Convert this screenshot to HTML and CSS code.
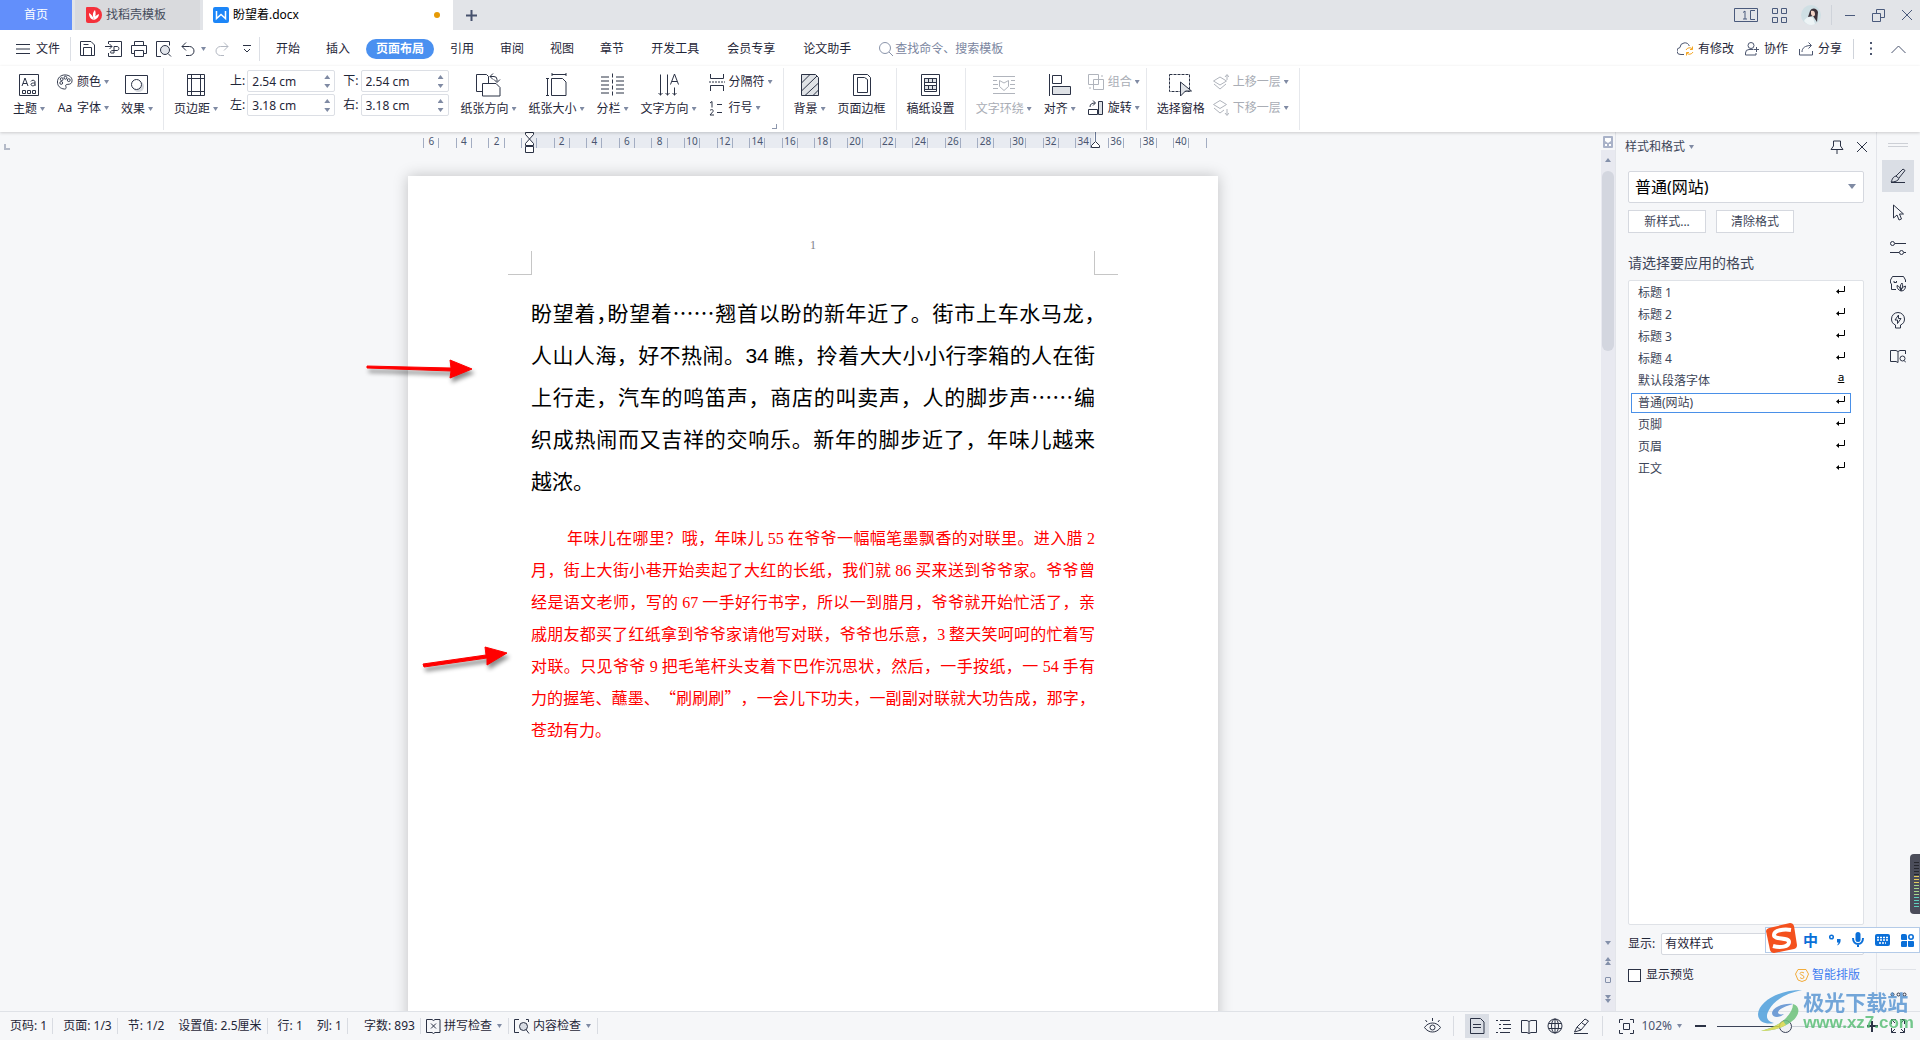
FILE: index.html
```html
<!DOCTYPE html>
<html lang="zh-CN">
<head>
<meta charset="utf-8">
<title>盼望着.docx</title>
<link rel="stylesheet" href="styles.css">
</head>
<body>
<div class="app">
  <header class="titlebar">
    <div class="tab tab-home">首页</div>
    <div class="tab tab-store">
      <svg width="16" height="16" viewBox="0 0 16 16"><path d="M1 0h7a8 8 0 0 1 0 16H2a2 2 0 0 1-2-2V1a1 1 0 0 1 1-1z" fill="#f5313b"/><path d="M8 13C4 12 3 9 3 6c2 1 4 3 5 7zM8 12c-2-4-1-7 1-9 1 3 1 6-1 9zM8 13c0-3 2-5 5-6 0 3-2 5-5 6z" fill="#fff"/></svg>
      找稻壳模板
    </div>
    <div class="tab tab-doc">
      <svg width="16" height="16" viewBox="0 0 16 16"><rect width="16" height="16" rx="2" fill="#1c86f8"/><path d="M3.500 4v7.500L8 7.500l4.500 4V4" fill="none" stroke="#fff" stroke-width="1.500"/></svg>
      <span>盼望着.docx</span><i class="unsaved"></i>
    </div>
    <button class="icon-btn new-tab" aria-label="新建"><svg width="13" height="13" viewBox="0 0 13 13"><path d="M6.500 1v11M1 6.500h11" stroke="#46516d" stroke-width="2"/></svg></button>
    <div class="window-tools">
      <svg width="24" height="15" viewBox="0 0 24 15"><path d="M.5.500h23v13H.500zM21 2.500h-4.500v9H21M19 11.500h2M9 4.500l2-1.500v8M9 11h4" fill="none" stroke="#4a5a7c"/></svg>
      <svg width="15" height="15" viewBox="0 0 15 15"><path d="M.5.500h5v5h-5zM9.500.500h5v5h-5zM.5 9.500h5v5h-5zM9.500 9.500h5v5h-5z" fill="none" stroke="#4a5a7c"/></svg>
      <svg width="20" height="20" viewBox="0 0 20 20"><circle cx="10" cy="10" r="10" fill="#cfdfe4"/><path d="M9 6c2-4 7-3 8 1l-1 10-4-6-5 1z" fill="#3a3038"/><path d="M10 6c2-1 4 0 4 3s-3 3-4 0z" fill="#f1d3c6"/><path d="M3 16c2-4 6-5 9-3l2 6c-4 2-8 1-11-3z" fill="#edf4f6"/></svg>
      <i class="divider"></i>
      <button class="icon-btn" aria-label="最小化"><svg width="12" height="12" viewBox="0 0 12 12"><path d="M1 6.500h10" stroke="#4a5a7c"/></svg></button>
      <button class="icon-btn" aria-label="还原"><svg width="13" height="13" viewBox="0 0 13 13"><path d="M.5 4.500h8v8h-8zM4.500 4.500v-4h8v8h-4" fill="none" stroke="#4a5a7c"/></svg></button>
      <button class="icon-btn" aria-label="关闭"><svg width="12" height="12" viewBox="0 0 12 12"><path d="M1 1l10 10M11 1L1 11" stroke="#4a5a7c"/></svg></button>
    </div>
  </header>

  <nav class="menubar">
    <button class="file-btn"><svg width="15" height="12" viewBox="0 0 15 12"><path d="M0 1.500h14M0 6h14M0 10.500h14" stroke="#2b3245"/></svg>文件</button>
    <div class="quick">
      <svg width="16" height="16" viewBox="0 0 16 16"><path d="M.5.500h10.500l3.500 3.500v10.500H.500zM3.500 14.500V6.500h8v8M3.500 3.500h5"/></svg>
      <svg width="17" height="16" viewBox="0 0 17 16"><path d="M3.500 3V.500h13v15h-13V12M0 5.500h7M4.500 3l2.500 2.500L4.500 8M6 12h3V5.500h3c2.500 0 2.500 4 0 4H8c-3 0-3 2.500-2 2.500"/></svg>
      <svg width="16" height="16" viewBox="0 0 16 16"><path d="M3.500 4.500v-4h9v4M3.500 12.500h-3v-8h15v8h-3M3.500 9.500h9v6h-9z"/></svg>
      <svg width="16" height="16" viewBox="0 0 16 16"><path d="M5 15.500H.500V.500h13v4"/><circle cx="9" cy="9" r="4.500" fill="#e3e6ec"/><path d="M12 12.500l3 3"/></svg>
      <span class="undo"><svg width="14" height="15" viewBox="0 0 14 15"><path d="M5 .5L1 4.500l4 4M1 4.500h7.500a4.500 4.500 0 0 1 0 9H5"/></svg><i class="caret"></i></span>
      <svg class="muted" width="14" height="15" viewBox="0 0 14 15"><path d="M9 .5l4 4-4 4M13 4.500H5.500a4.500 4.500 0 0 0 0 9H9"/></svg>
      <svg class="more" width="10" height="8" viewBox="0 0 10 8"><path d="M1 .5h8M2 4l3 3 3-3"/></svg>
    </div>
    <ul class="menus">
      <li><a href="#">开始</a></li><li><a href="#">插入</a></li><li><a href="#" class="active">页面布局</a></li><li><a href="#">引用</a></li><li><a href="#">审阅</a></li><li><a href="#">视图</a></li><li><a href="#">章节</a></li><li class="wide"><a href="#">开发工具</a></li><li class="wide"><a href="#">会员专享</a></li><li class="wide"><a href="#">论文助手</a></li>
    </ul>
    <label class="search"><svg width="15" height="15" viewBox="0 0 15 15"><circle cx="6" cy="6" r="5.500"/><path d="M10 10l4 4"/></svg><input type="text" placeholder="查找命令、搜索模板" aria-label="查找命令"></label>
    <div class="menu-right">
      <button><svg width="17" height="14" viewBox="0 0 17 14"><path d="M7 12.500H4A3.500 3.500 0 0 1 3 5.500 4.800 4.800 0 0 1 12.300 4" /><path d="M9 8a4 4 0 0 1 6.500-1M15.500 4.500V7.500h-2.500M16 10a4 4 0 0 1-6.500 1M9.500 13.500v-3H12" stroke="#f5a623"/></svg>有修改</button>
      <button><svg width="15" height="14" viewBox="0 0 15 14"><circle cx="6" cy="3.500" r="3"/><path d="M8.500 7.500H4a3.500 3.500 0 0 0-3.500 3.500v2h10.500v-2M11.500 5v5M9 7.500h5"/></svg>协作</button>
      <button><svg width="15" height="14" viewBox="0 0 15 14"><path d="M.5 7v6h13V9M3 10c0-4 3-6.500 9-6.500M9.500.500l3 3-3 3"/></svg>分享</button>
      <i class="divider"></i>
      <svg width="4" height="14" viewBox="0 0 4 14"><path d="M1 1h2M1 6.500h2M1 12h2" stroke-width="2"/></svg>
      <svg class="collapse" width="15" height="9" viewBox="0 0 15 9"><path d="M.5 8l7-7 7 7"/></svg>
    </div>
  </nav>

  <section class="ribbon">
    <div class="group">
      <button class="big"><svg width="20" height="22" viewBox="0 0 20 22"><path d="M.5.500h19v21H.500zM3.500 16.500h3v3h-3zM8.500 16.500h3v3h-3zM13.500 16.500h3v3h-3zM3 12l3-8 3 8M4 9.500h4M16 12V8c0-2.500-4-2-4-.5M16 9c-2 0-4 0-4 1.500s3 2 4 0"/></svg><span>主题<i class="caret"></i></span></button>
      <div class="stack">
        <button class="small"><svg width="17" height="16" viewBox="0 0 17 16"><path d="M8 15.500C3 15 .5 12 .5 8S3.500.500 8.500.500s7.500 3 7.500 6-2 4-4.500 4-2.500 1-2 2.500 0 2.500-1.500 2.500z"/><circle cx="4.500" cy="9" r="1.500"/><circle cx="5" cy="5" r="1.500"/><circle cx="9" cy="3.500" r="1.500"/><circle cx="12.500" cy="6" r="1.500"/></svg>颜色<i class="caret"></i></button>
        <button class="small"><span class="aa">Aa</span>字体<i class="caret"></i></button>
      </div>
      <button class="big"><svg width="24" height="20" viewBox="0 0 24 20"><circle cx="13.500" cy="11.500" r="5.500" fill="#d5d8de" stroke="none"/><path d="M.5.500h22v18H.500z"/><circle cx="11.500" cy="9.500" r="5" fill="#fff"/></svg><span>效果<i class="caret"></i></span></button>
    </div>
    <div class="group">
      <button class="big"><svg width="18" height="22" viewBox="0 0 18 22"><path d="M.5.500h17v21H.500zM4.500 0v22M13.500 0v22M0 4.500h18M0 17.500h18"/></svg><span>页边距<i class="caret"></i></span></button>
      <div class="margins">
        <label>上:<span class="spin"><input type="text" value="2.54 cm"><i></i></span></label>
        <label>下:<span class="spin"><input type="text" value="2.54 cm"><i></i></span></label>
        <label>左:<span class="spin"><input type="text" value="3.18 cm"><i></i></span></label>
        <label>右:<span class="spin"><input type="text" value="3.18 cm"><i></i></span></label>
      </div>
      <button class="big"><svg width="25" height="24" viewBox="0 0 25 24"><path d="M6 18.500H.500v-17h10l2 2v7M6.500 10.500h13.500l4 4v8.500H6.500zM17 .5l-3 3 3 3M14 3.500h4a3 3 0 0 1 3 3v2M18 6.500l3 3 3-3"/></svg><span>纸张方向<i class="caret"></i></span></button>
      <button class="big"><svg width="21" height="24" viewBox="0 0 21 24"><path d="M5.500 5.500h11l3.500 3.500v13.500H5.500zM1.500 5v18M0 5.500h3M0 22.500h3M6 1.500h14M6 0v3M20 0v3"/></svg><span>纸张大小<i class="caret"></i></span></button>
      <button class="big"><svg width="24" height="23" viewBox="0 0 24 23"><path d="M0 3.500h8M0 7.500h8M0 11.500h8M0 15.500h8M0 19.500h8M15 3.500h8M15 7.500h8M15 11.500h8M15 15.500h8M15 19.500h8"/><path d="M11.500 0v23" stroke-dasharray="4 2"/></svg><span>分栏<i class="caret"></i></span></button>
      <button class="big"><svg width="21" height="23" viewBox="0 0 21 23"><path d="M2.500 1v21M.5 19.500l2 2 2-2M9.500 1v21M7.500 19.500l2 2 2-2M16.500 14v8M14.500 19.500l2 2 2-2M12.500 11l4-10.500 4 10.500M14 8h5"/></svg><span>文字方向<i class="caret"></i></span></button>
      <div class="stack">
        <button class="small"><svg width="16" height="17" viewBox="0 0 16 17"><path d="M1.500 0v4.500h13V0M1.500 17v-5.500h13V17"/><path d="M0 8h16" stroke-dasharray="2 1"/></svg>分隔符<i class="caret"></i></button>
        <button class="small"><svg width="16" height="15" viewBox="0 0 16 15"><path d="M1 2l2-1.500v6M1 9.500c1-1.500 4-1 3 1l-3 3.500h4M8 3.500h5M8 11.500h5"/></svg>行号<i class="caret"></i></button>
      </div>
      <i class="launcher"></i>
    </div>
    <div class="group">
      <button class="big"><svg width="18" height="22" viewBox="0 0 18 22"><path d="M.5.500h14l3 3v18H.500z" fill="#dfe2e6"/><path d="M.5 9L9 .5M.5 17L16 2M4 21.500L17.500 9M12 21.500l5.500-5.500"/></svg><span>背景<i class="caret"></i></span></button>
      <button class="big"><svg width="18" height="22" viewBox="0 0 18 22"><path d="M.5.500h14l3 3v18H.500zM4.500 3.500h7l3 2v13h-10z"/></svg><span>页面边框</span></button>
    </div>
    <div class="group">
      <button class="big"><svg width="19" height="22" viewBox="0 0 19 22"><path d="M.5.500h18v21H.500z"/><path d="M3.500 4.500h12v4h-12zM3.500 11.500h12v4h-12z" fill="#dfe2e6"/><path d="M3.500 4.500h12v13h-12zM7.500 4v4M11.500 4v4M7.500 11v4M11.500 11v4"/></svg><span>稿纸设置</span></button>
    </div>
    <div class="group arrange">
      <button class="big" disabled><svg width="22" height="18" viewBox="0 0 22 18"><path d="M0 .5h22M0 17.500h22M0 4.500h4M0 8.500h5M0 12.500h5M18 4.500h4M17 8.500h5M17 12.500h5M6.500 4.500l4.500 2.500 4.500-2.500v6l-4.500 4-4.500-4z"/></svg><span>文字环绕<i class="caret"></i></span></button>
      <button class="big"><svg width="22" height="22" viewBox="0 0 22 22"><path d="M.5 0v22M3.500 1.500h9v8h-9z"/><path d="M3.500 12.500h18v8h-18z" fill="#dfe2e6"/></svg><span>对齐<i class="caret"></i></span></button>
      <div class="stack">
        <button class="small" disabled><svg width="16" height="16" viewBox="0 0 16 16"><path d="M.5.500h10v10H.500zM5.500 5.500h10v10h-10zM13 2h2M1 14h2"/></svg>组合<i class="caret"></i></button>
        <button class="small"><svg width="16" height="16" viewBox="0 0 16 16"><path d="M.5 9.500h9v5h-9zM2 7c0-3 2-4 5-4M5 .5L7.500 3 5 5.500"/><path d="M10.500 1.500h4v13h-4z" fill="#dfe2e6"/></svg>旋转<i class="caret"></i></button>
      </div>
    </div>
    <div class="group layers">
      <button class="big"><svg width="24" height="24" viewBox="0 0 24 24"><path d="M.5 1.500h20v17H.500z" stroke-dasharray="3 1"/><path d="M11.500 9l11 9h-6l-5 5z" fill="#dfe2e6"/></svg><span>选择窗格</span></button>
      <div class="stack">
        <button class="small" disabled><svg width="16" height="16" viewBox="0 0 16 16"><path d="M7 3L.500 7 7 11l6.500-4zM1 10l6 5 6-5M14 6V1M12 3l2-2.500L16 3"/></svg>上移一层<i class="caret"></i></button>
        <button class="small" disabled><svg width="16" height="16" viewBox="0 0 16 16"><path d="M7 .5L.500 4.500 7 8.500l6.500-4zM1 8l6 5 4-3M14 9v6M12 13l2 2.500 2-2.500"/></svg>下移一层<i class="caret"></i></button>
      </div>
    </div>
  </section>

  <div class="workspace">
    <main class="canvas">
      <i class="tab-stop"></i>
      <div class="sheet-column">
        <div class="ruler">
          <span><b>6</b></span><span><b>4</b></span><span><b>2</b></span><span><b></b></span><span><b>2</b></span><span><b>4</b></span><span><b>6</b></span><span><b>8</b></span><span><b>10</b></span><span><b>12</b></span><span><b>14</b></span><span><b>16</b></span><span><b>18</b></span><span><b>20</b></span><span><b>22</b></span><span><b>24</b></span><span><b>26</b></span><span><b>28</b></span><span><b>30</b></span><span><b>32</b></span><span><b>34</b></span><span><b>36</b></span><span><b>38</b></span><span><b>40</b></span><span class="last"><b></b></span>
          <svg class="indent-left" width="10" height="22" viewBox="0 0 10 22"><path d="M.5.500h8v2l-4 4.500-4-4.500zM.5 13.500v-2l4-4.500 4 4.500v2zM.5 14.500h8v6h-8z" fill="#fff" stroke="#2b3245"/></svg>
          <svg class="indent-right" width="10" height="16" viewBox="0 0 10 16"><path d="M4.500 0v9" stroke="#6b7a99"/><path d="M.5 15.500v-2l4-4 4 4v2z" fill="#fff" stroke="#2b3245"/></svg>
        </div>
        <article class="page">
          <div class="page-head"><i></i><span>1</span><i></i></div>
          <p class="lead">
            <span>盼望着<em>，</em>盼望着……翘首以盼的新年近了。街市上车水马龙<em>，</em></span>
            <span>人山人海，好不热闹。<b>34</b> 瞧，拎着大大小小行李箱的人在街</span>
            <span>上行走，汽车的鸣笛声，商店的叫卖声，人的脚步声……编</span>
            <span>织成热闹而又吉祥的交响乐。新年的脚步近了，年味儿越来</span>
            <span class="end">越浓。</span>
          </p>
          <p class="body-text">
            <span class="indent">年味儿在哪里？哦，年味儿 <b>55</b> 在爷爷一幅幅笔墨飘香的对联里。进入腊 <b>2</b></span>
            <span>月，街上大街小巷开始卖起了大红的长纸，我们就 <b>86</b> 买来送到爷爷家。爷爷曾</span>
            <span>经是语文老师，写的 <b>67</b> 一手好行书字，所以一到腊月，爷爷就开始忙活了，亲</span>
            <span>戚朋友都买了红纸拿到爷爷家请他写对联，爷爷也乐意，<b>3</b> 整天笑呵呵的忙着写</span>
            <span>对联。只见爷爷 <b>9</b> 把毛笔杆头支着下巴作沉思状，然后，一手按纸，一 <b>54</b> 手有</span>
            <span>力的握笔、蘸墨、“刷刷刷”，一会儿下功夫，一副副对联就大功告成，那字，</span>
            <span class="end">苍劲有力。</span>
          </p>
          <svg class="arrow arrow-one" width="116" height="36" viewBox="0 0 116 36"><path d="M3 12l84 2-1-8 22 9-22 9 1-7-84-3z" fill="#f00" stroke="#f00" stroke-linejoin="round"/></svg>
          <svg class="arrow arrow-two" width="96" height="36" viewBox="0 0 96 36"><path d="M3 22l63-9-1-8 22 6-20 12v-7L4 25z" fill="#f00" stroke="#f00" stroke-linejoin="round"/></svg>
        </article>
      </div>
    </main>

    <div class="scrollbar">
      <svg width="10" height="12" viewBox="0 0 10 12"><rect width="10" height="12" rx="1" fill="#a9b2c8"/><path d="M2 2h6v3L5 7 2 5zM2 8h2v2H2zM6 8h2v2H6z" fill="#fff"/></svg>
      <div class="track">
        <i class="up"></i><i class="thumb"></i>
        <div class="track-end"><i class="down"></i><span><i class="up"></i><i class="up"></i></span><i class="dot"></i><span><i class="down"></i><i class="down"></i></span></div>
      </div>
    </div>

    <aside class="panel">
      <div class="panel-head"><span>样式和格式<i class="caret"></i></span>
        <button class="icon-btn" aria-label="固定"><svg width="14" height="14" viewBox="0 0 14 14"><path d="M3.500 1h7v5l2.500 3.500H1L3.500 6zM7 9.500V14" fill="none" stroke="#2b3245"/></svg></button>
        <button class="icon-btn" aria-label="关闭"><svg width="12" height="12" viewBox="0 0 12 12"><path d="M1 1l10 10M11 1L1 11" stroke="#2b3245"/></svg></button></div>
      <div class="select-wrap current"><select aria-label="当前样式"><option>普通(网站)</option></select><i class="caret"></i></div>
      <div class="panel-buttons"><button>新样式...</button><button>清除格式</button></div>
      <h2>请选择要应用的格式</h2>
      <ul class="styles">
        <li>标题 1<svg width="10" height="9" viewBox="0 0 10 9"><path d="M8.500 0v5.500H2"/><path d="M3 3v5L0 5.500z"/></svg></li>
        <li>标题 2<svg width="10" height="9" viewBox="0 0 10 9"><path d="M8.500 0v5.500H2"/><path d="M3 3v5L0 5.500z"/></svg></li>
        <li>标题 3<svg width="10" height="9" viewBox="0 0 10 9"><path d="M8.500 0v5.500H2"/><path d="M3 3v5L0 5.500z"/></svg></li>
        <li>标题 4<svg width="10" height="9" viewBox="0 0 10 9"><path d="M8.500 0v5.500H2"/><path d="M3 3v5L0 5.500z"/></svg></li>
        <li>默认段落字体<u>a</u></li>
        <li class="selected">普通(网站)<svg width="10" height="9" viewBox="0 0 10 9"><path d="M8.500 0v5.500H2"/><path d="M3 3v5L0 5.500z"/></svg></li>
        <li>页脚<svg width="10" height="9" viewBox="0 0 10 9"><path d="M8.500 0v5.500H2"/><path d="M3 3v5L0 5.500z"/></svg></li>
        <li>页眉<svg width="10" height="9" viewBox="0 0 10 9"><path d="M8.500 0v5.500H2"/><path d="M3 3v5L0 5.500z"/></svg></li>
        <li>正文<svg width="10" height="9" viewBox="0 0 10 9"><path d="M8.500 0v5.500H2"/><path d="M3 3v5L0 5.500z"/></svg></li>
      </ul>
      <div class="show-row"><label for="show">显示:</label><div class="select-wrap"><select id="show"><option>有效样式</option></select></div></div>
      <div class="preview-row"><label><input type="checkbox">显示预览</label>
        <a href="#"><svg width="14" height="13" viewBox="0 0 14 13"><path d="M3 .5h8l2.500 4.500L11 11l-4 1.500L3 11 .500 5z" fill="none" stroke="#f2ac3c"/><path d="M9 4C8 3 5 3 5 4.500S9 6 9 8s-3 2-4 .5" fill="none" stroke="#f2ac3c"/></svg>智能排版</a></div>
    </aside>

    <nav class="rail">
      <i class="grip"></i>
      <button class="on" aria-label="样式"><svg width="16" height="16" viewBox="0 0 16 16"><path d="M1 14.500h14M6 8l7-7 2 1.500-6 7.500M6 8l3 2.500C8 13 5 14 1 14c1-1 1-5 5-6z"/></svg></button>
      <button aria-label="选择"><svg width="14" height="17" viewBox="0 0 14 17"><path d="M2.500 1v13l3.500-3 2 5 2.500-1-2-5h4z"/></svg></button>
      <button aria-label="属性"><svg width="16" height="14" viewBox="0 0 16 14"><circle cx="2.500" cy="2.500" r="2"/><circle cx="11.500" cy="11.500" r="2"/><path d="M5 2.500h11M0 11.500h9M14 11.500h2"/></svg></button>
      <button aria-label="素材"><svg width="16" height="16" viewBox="0 0 16 16"><path d="M6 13.500H1.500V8C0 7 .5 5 .5 4l2-3.500h11l2 3.500v2M4 5v1.500h2.500V5"/><path d="M11 15C8 14 7 12 7 9.500c2 .5 3 2 4 5.500zM11 14c-1-3-1-5 1-7 1 2 1 4-1 7zM11 15c0-3 2-4 4.500-5 0 3-1.500 5-4.500 5z"/></svg></button>
      <button aria-label="灵感"><svg width="14" height="17" viewBox="0 0 14 17"><path d="M4.500 13v3h5v-3C12 12 13.500 10 13.500 7a6.500 6.500 0 1 0-13 0c0 3 1.500 5 4 6zM7.500 3l-3.500 5h2.500v3.500L10 6.500H7.500z"/></svg></button>
      <button aria-label="查词"><svg width="16" height="15" viewBox="0 0 16 15"><path d="M8 13.500l-2-1H.500v-11H6l2 1 2-1h5.500V5M8 2.500v11"/><circle cx="12.500" cy="9.500" r="2.500"/><path d="M14 11.500l2 2"/></svg></button>
      <div class="rail-end"><svg width="17" height="5" viewBox="0 0 17 5"><circle cx="2.500" cy="2.500" r="1.500"/><circle cx="8.500" cy="2.500" r="1.500"/><circle cx="14.500" cy="2.500" r="1.500"/></svg></div>
    </nav>
  </div>

  <footer class="status">
    <span class="cell">页码: 1</span><span class="cell">页面: 1/3</span><span class="cell">节: 1/2<span>设置值: 2.5厘米</span></span><span class="cell">行: 1<span>列: 1</span></span><span class="cell words">字数: 893</span>
    <button class="check"><svg width="15" height="15" viewBox="0 0 15 15"><path d="M6 .5H.500v13h5.500l1.500 1 1.500-1h5V.500H9l-1.500 1zM5 4.500l5 5M10 4.500l-5 5"/></svg>拼写检查<i class="caret"></i></button>
    <button class="check"><svg width="16" height="15" viewBox="0 0 16 15"><path d="M3 .5H.500v13H5M12 .5h2.500V3M3 .5h2"/><circle cx="9.500" cy="7.500" r="4" fill="#d9dde4"/><path d="M12 10.500l3 4"/></svg>内容检查<i class="caret"></i></button>
    <div class="views">
      <button class="view" aria-label="护眼"><svg width="17" height="17" viewBox="0 0 17 17"><path d="M.5 9.500c4-6 12-6 16 0-4 6-12 6-16 0zM8.500 3V0M3 4L1.500 2M14 4l1.500-2"/><circle cx="8.500" cy="9.500" r="2.500"/></svg></button>
      <i class="divider"></i>
      <button class="view on" aria-label="页面视图"><svg width="15" height="16" viewBox="0 0 15 16"><path d="M.5.500h10l3.500 3.500v11.500H.500zM3 6.500h8M3 9.500h8"/></svg></button>
      <button class="view" aria-label="大纲"><svg width="15" height="14" viewBox="0 0 15 14"><path d="M0 1.500h2M4 1.500h10M3 5.500h2M7 5.500h8M3 9.500h2M7 9.500h8M0 13.500h2M4 13.500h10"/></svg></button>
      <button class="view" aria-label="阅读版式"><svg width="16" height="15" viewBox="0 0 16 15"><path d="M8 14.500l-2-1H.500v-12H6l2 1 2-1h5.500v12H10zM8 2.500v12"/></svg></button>
      <button class="view" aria-label="Web 版式"><svg width="16" height="16" viewBox="0 0 16 16"><circle cx="8" cy="8" r="7"/><ellipse cx="8" cy="8" rx="3.500" ry="7"/><path d="M1.500 5.500h13M1.500 10.500h13M8 1v14"/></svg></button>
      <button class="view" aria-label="写作模式"><svg width="17" height="16" viewBox="0 0 17 16"><path d="M1 15.500h14M4 9l8-8 3.500 2L8 12l-6.500 2zM4 9l4 3M9 5l3 2"/></svg></button>
      <i class="divider"></i>
      <button class="view" aria-label="适应页面"><svg width="15" height="15" viewBox="0 0 15 15"><path d="M.5 4V.500H4M11 .5h3.500V4M14.500 11v3.500H11M4 14.500H.500V11M4.500 4.500h6v6h-6z"/></svg></button>
      <button class="percent">102%<i class="caret"></i></button>
      <button class="icon-btn" aria-label="缩小"><svg width="11" height="11" viewBox="0 0 11 11"><path d="M0 5h11" stroke-width="2"/></svg></button>
      <input type="range" class="zoom" min="0" max="100" value="47" aria-label="缩放">
      <button class="icon-btn" aria-label="放大"><svg width="11" height="11" viewBox="0 0 11 11"><path d="M0 5h11M5 0v11" stroke-width="2"/></svg></button>
      <button class="view full" aria-label="全屏"><svg width="16" height="16" viewBox="0 0 16 16"><path d="M1.500 6V1.500H6M10 1.500h4.500V6M14.500 10v4.500H10M6 14.500H1.500V10M1.500 1.500L5 5M14.500 1.500L11 5M14.500 14.500L11 11M1.500 14.500L5 11"/></svg></button>
    </div>
  </footer>

  <svg class="meter" width="10" height="60" viewBox="0 0 10 60"><rect width="14" height="60" rx="4" fill="#4b4d5a"/><path d="M6.500 8v13" stroke="#26272e" stroke-width="5" stroke-dasharray="1 2"/><path d="M6.500 22v10" stroke="#e3c95c" stroke-width="5" stroke-dasharray="1 2"/><path d="M6.500 31v13" stroke="#a8d68a" stroke-width="5" stroke-dasharray="1 2"/><path d="M6.500 43v11" stroke="#5fd0bd" stroke-width="5" stroke-dasharray="1 2"/></svg>

  <div class="ime">
    <svg class="ime-logo" width="32" height="31" viewBox="0 0 32 31"><path d="M3 5L24 0q3 0 4 3l3 19q0 3-3 4L8 30q-3 0-4-3L0 8q0-2 3-3z" fill="#f4511e"/><path d="M25 7C18 6 8 7 8 12s15 2 15 7-9 6-16 4" fill="none" stroke="#fff" stroke-width="4"/></svg>
    <b>中</b>
    <svg width="12" height="12" viewBox="0 0 12 12"><circle cx="2.500" cy="3" r="1.800" fill="none" stroke="#0a6fd8" stroke-width="1.500"/><path d="M8 5h3.500c.5 3-.5 5-3 6.500v-1c1-1 1-1.500 1-2H8z" fill="#0a6fd8"/></svg>
    <svg width="12" height="16" viewBox="0 0 12 16"><rect x="3.500" width="5" height="10" rx="2.500" fill="#0a6fd8"/><path d="M1 6c0 8 10 8 10 0M6 12v3" fill="none" stroke="#0a6fd8" stroke-width="2"/></svg>
    <svg width="15" height="12" viewBox="0 0 15 12"><rect width="15" height="12" rx="2" fill="#0a6fd8"/><path d="M2 3.500h11M2 6h11M4 9h7" stroke="#fff" stroke-width="1.500" stroke-dasharray="2 1"/></svg>
    <svg width="13" height="13" viewBox="0 0 13 13"><path d="M1 0h3a2 2 0 0 1 2 2v4H1a1 1 0 0 1-1-1V1zM1 7h5v5a1 1 0 0 1-1 1H1a1 1 0 0 1-1-1V8zM7 7h5a1 1 0 0 1 1 1v4a1 1 0 0 1-1 1H8a1 1 0 0 1-1-1z" fill="#0a6fd8"/><circle cx="10" cy="3" r="2.200" fill="none" stroke="#0a6fd8" stroke-width="1.600"/></svg>
  </div>

  <div class="site-mark">
    <svg width="46" height="42" viewBox="0 0 46 42"><path d="M45 0C20 0 2 12 1 24c0 8 8 11 16 9-7-2-9-6-5-13C17 10 30 3 45 0z" fill="#4fa0dc"/><path d="M36 14c-10-1-20 3-21 9 0 5 8 5 12 1-4 1-6 0-6-2 2-4 9-6 15-8z" fill="#5b8fd0"/><path d="M36 14c8 2 7 12-2 18-8 6-19 9-30 9 10-3 19-7 24-12 5-5 8-10 8-15z" fill="#6cc27a"/><path d="M26 31c-6 5-14 8-22 10 10 0 18-2 25-6z" fill="#d9d84a"/></svg>
    <div><strong>极光下载站</strong><span>www.xz7.com</span></div>
  </div>
</div>
</body>
</html>
```
FILE: styles.css
```css
* { box-sizing: border-box; }
body { margin: 0; font: 12px/16px "Noto Sans", "Noto Sans CJK SC", sans-serif; color: #1f2638; }
button, input, select { font: inherit; color: inherit; }
button { background: none; border: 0; padding: 0; display: flex; align-items: center; white-space: nowrap; }
ul { list-style: none; margin: 0; padding: 0; }
a { color: inherit; text-decoration: none; }
svg { display: block; flex: none; }
.app { position: relative; display: flex; flex-direction: column; height: 100vh; overflow: hidden; background: #f6f7f9; }
.divider { width: 1px; height: 20px; background: #cfd3da; }
.caret { display: inline-block; flex: none; width: 5px; height: 4px; margin-left: 3px; background: #7f8aa3; clip-path: polygon(0 0, 100% 0, 50% 100%); }

/* title bar */
.titlebar { display: flex; height: 30px; background: #e2e4e8; }
.tab { display: flex; align-items: center; gap: 4px; }
.tab-home { width: 72px; justify-content: center; background: #628ffb; color: #fff; }
.tab-store { width: 125px; margin-left: 3px; padding-left: 11px; background: #d9dadd; color: #454c5c; }
.tab-doc { width: 250px; margin-left: 3px; padding: 0 13px 0 10px; background: #fff; color: #000; }
.unsaved { width: 6px; height: 6px; margin-left: auto; border-radius: 50%; background: #e69a06; }
.new-tab { margin-left: 12px; }
.window-tools { display: flex; align-items: center; gap: 14px; margin-left: auto; padding-right: 7px; }
.window-tools .divider { margin-left: -4px; margin-right: -2px; }
.window-tools .icon-btn + .icon-btn { margin-left: 2px; }

/* menu bar */
.menubar { display: flex; align-items: center; height: 36px; padding: 2px 14px 0 16px; background: #fff; }
.file-btn { gap: 5px; padding-right: 10px; }
.quick { display: flex; align-items: center; gap: 9px; height: 24px; padding: 0 7px 0 9px; border: solid #dcdfe5; border-width: 0 1px; }
.quick svg, .search svg, .menu-right svg, .big svg, .small svg, .rail svg, .status svg { fill: none; stroke: #2b3245; }
.undo { display: flex; align-items: center; gap: 3px; }
.quick .muted { stroke: #b3b8c2; }
.quick .more { margin-left: 4px; }
.menus { display: flex; margin-left: 3px; }
.menus li { padding: 0 3px; }
.menus .wide { padding: 0 4px; }
.menus a { display: block; padding: 0 10px; line-height: 20px; white-space: nowrap; }
.menus .active { border-radius: 10px; background: #4a90f0; color: #fff; font-weight: 700; }
.search { display: flex; align-items: center; gap: 1px; margin-left: 14px; }
.search svg { stroke: #8a94aa; }
.search input { width: 130px; padding: 0; border: 0; outline: 0; background: none; }
.search input::placeholder { color: #7b86a0; opacity: 1; }
.menu-right { display: flex; align-items: center; gap: 11px; margin-left: auto; }
.menu-right button { gap: 4px; }
.menu-right svg { stroke: #4b556e; }
.menu-right .collapse { margin-left: 7px; }
.menu-right .divider { margin-right: 4px; }

/* ribbon */
.ribbon { position: relative; z-index: 2; display: flex; height: 66px; padding: 2px 0 2px 3px; background: #fff; box-shadow: 0 1px 3px rgba(0, 0, 0, .18); }
.group { position: relative; display: flex; gap: 12px; padding: 0 10px; border-right: 1px solid #e6e8ec; }
.group.arrange { padding-right: 6px; }
.group.layers { gap: 8px; }
.big { flex-direction: column; gap: 4px; padding-top: 5px; align-self: flex-start; }
.big svg { height: 24px; }
.stack { display: flex; flex-direction: column; gap: 6px; padding-top: 4px; }
.small { height: 20px; gap: 4px; }
.small .caret { margin-left: -1px; }
.big span { display: flex; align-items: center; }
.small svg { width: 16px; }
.aa { width: 16px; font-size: 12px; }
button:disabled { color: #a9adb5; }
button:disabled svg { stroke: #b0b4bc; }
.margins { display: grid; grid-template-columns: auto auto; gap: 2px 8px; padding-top: 2px; align-self: flex-start; }
.margins label { display: flex; align-items: center; gap: 2px; }
.spin { position: relative; display: flex; }
.spin input { width: 88px; height: 22px; padding: 0 4px; border: 1px solid #dcdfe5; border-radius: 2px; outline: 0; }
.spin i { position: absolute; right: 5px; top: 5px; width: 6px; height: 13px; background: #7f8aa3; clip-path: polygon(50% 0, 100% 4px, 0 4px, 0 9px, 100% 9px, 50% 13px, 0 9px, 0 4px); }
.launcher { position: absolute; right: 6px; bottom: 1px; width: 5px; height: 5px; border: solid #8d97ad; border-width: 0 1px 1px 0; }

/* workspace */
.workspace { display: flex; flex: 1; min-height: 0; }
.canvas { position: relative; flex: 1; display: flex; justify-content: center; padding-left: 25px; overflow: hidden; }
.tab-stop { position: absolute; left: 4px; top: 12px; width: 6px; height: 6px; border: solid #b4bac8; border-width: 0 0 2px 2px; }
.sheet-column { width: 810px; }
.ruler { position: relative; display: grid; grid-template-columns: repeat(25, 1fr); width: 815px; height: 16px; margin: 0 0 28px 7px; background: linear-gradient(#e8ebf1, #e8ebf1) 114px 0 / 565px 16px no-repeat; }
.ruler span { display: flex; justify-content: center; align-items: flex-end; }
.ruler b { width: 50%; height: 10px; border: solid #a3adc2; border-width: 0 1px; font-size: 10px; line-height: 6px; font-weight: 400; color: #4a5570; display: flex; justify-content: center; }
.ruler .last b { border-right: 0; }
.indent-left { position: absolute; left: 110px; top: 0; }
.indent-right { position: absolute; left: 676px; top: 0; }
.page { position: relative; min-height: 1146px; padding: 62px 123px; background: #fff; box-shadow: 0 0 14px rgba(0, 0, 0, .22); }
.page-head { display: flex; justify-content: space-between; height: 37px; margin: 0 -23px 16px; color: #7d8087; font: 12px/14px "Liberation Serif", serif; }
.page-head i { width: 24px; height: 24px; margin-top: 13px; border: solid #c6c6c6; border-width: 0 1px 1px 0; }
.page-head i:last-child { border-width: 0 0 1px 1px; }
.page p { margin: 0; font-family: "Noto Sans CJK SC", sans-serif; }
.page p span { display: block; text-align: justify; text-align-last: justify; white-space: nowrap; }
.page p .end { text-align-last: left; }
.page p b { font-weight: 400; line-height: 0; }
.page em { font-style: normal; font-feature-settings: "halt"; }
.lead { font-size: 21px; line-height: 42px; color: #000; }
.lead b { font-family: "Liberation Sans", sans-serif; }
.page .body-text { margin-top: 20px; font-size: 16px; line-height: 32px; color: #f00; text-spacing-trim: space-all; }
.body-text b { font-family: "Liberation Serif", serif; }
.body-text .indent { padding-left: 36px; }
.arrow { position: absolute; filter: drop-shadow(2px 4px 2px rgba(0, 0, 0, .45)); }
.arrow-one { left: -44px; top: 178px; }
.arrow-two { left: 12px; top: 466px; }

.scrollbar { width: 15px; display: flex; flex-direction: column; align-items: center; gap: 2px; padding-top: 4px; border-right: 1px solid #e3e5ea; }
.track { flex: 1; align-self: stretch; display: flex; flex-direction: column; align-items: center; padding: 8px 0; background: #e8e9f0; }
.up, .down { width: 6px; height: 4px; background: #8490aa; clip-path: polygon(50% 0, 100% 100%, 0 100%); }
.down { clip-path: polygon(0 0, 100% 0, 50% 100%); }
.thumb { width: 12px; height: 180px; margin-top: 9px; border-radius: 6px; background: #d3d6df; }
.track-end { display: flex; flex-direction: column; align-items: center; gap: 12px; margin-top: auto; }
.track-end span { display: grid; gap: 0; }
.dot { width: 6px; height: 6px; border: 1px solid #8490aa; border-radius: 1px; }

.panel { width: 261px; display: flex; flex-direction: column; padding: 7px 12px 28px 12px; border-right: 1px solid #e3e5ea; color: #3d4558; }
.panel-head { display: flex; align-items: center; gap: 12px; height: 16px; margin: 0 -4px 16px -3px; }
.panel-head span { margin-right: auto; display: flex; align-items: center; }
.panel-head .caret { margin-left: 4px; }
.select-wrap { position: relative; display: flex; flex: 1; }
.select-wrap select { width: 100%; height: 22px; padding: 0 3px; border: 1px solid #d5d8df; border-radius: 2px; background: #fff; appearance: none; }
.current { flex: none; }
.current select { height: 32px; padding-left: 6px; font-size: 16px; color: #000; }
.current .caret { position: absolute; right: 8px; top: 13px; width: 8px; height: 5px; }
.panel-buttons { display: flex; gap: 10px; margin-top: 7px; }
.panel-buttons button { width: 78px; height: 23px; justify-content: center; border: 1px solid #d5d8df; background: #fff; }
.panel h2 { margin: 20px 0 7px; font-size: 14px; line-height: 20px; font-weight: 400; }
.styles { flex: 1; padding: 2px; border: 1px solid #dfe2e7; border-radius: 2px; background: #fff; }
.styles li { display: flex; justify-content: space-between; width: 220px; height: 20px; margin-bottom: 2px; padding: 0 4px 0 6px; border: 1px solid transparent; line-height: 18px; }
.styles svg { margin-top: 2px; stroke: #000; fill: none; }
.styles svg path + path { fill: #000; stroke: none; }
.styles u { width: 10px; font: 11px/12px "DejaVu Sans Mono", monospace; color: #000; text-align: center; }
.styles .selected { border-color: #4a90e8; }
.show-row { display: flex; align-items: center; gap: 6px; margin-top: 8px; color: #1f2638; }
.preview-row { display: flex; justify-content: space-between; align-items: center; height: 16px; margin-top: 12px; padding-right: 4px; color: #1f2638; }
.preview-row label, .preview-row a { display: flex; align-items: center; gap: 3px; }
.preview-row a { color: #3f7cf0; }
.preview-row input { width: 13px; height: 13px; margin: 0 2px 0 0; border: 1px solid #2b3245; background: #fff; appearance: none; }

.rail { width: 43px; display: flex; flex-direction: column; align-items: center; gap: 4px; padding: 11px 2px 0 0; }
.grip { width: 20px; height: 4px; margin-bottom: 9px; border: solid #cdd0d6; border-width: 1px 0; }
.rail button { width: 32px; height: 32px; justify-content: center; }
.rail .on, .view.on { background: #dadee5; }
.rail-end { align-self: stretch; display: flex; justify-content: center; height: 42px; margin: auto 2px 0 3px; padding-top: 22px; border-top: 1px solid #dfe2e7; }

/* status bar */
.status { display: flex; align-items: center; height: 29px; border-top: 1px solid #dfe2e7; white-space: nowrap; }
.cell { display: flex; padding: 0 5px 0 10px; border-right: 1px solid #d9dce2; }
.cell > span { margin-left: 14px; }
.words { padding-left: 16px; }
.check { gap: 3px; padding: 0 6px 0 5px; border-right: 1px solid #d9dce2; }
.check .caret { margin-left: 2px; }
.percent .caret { margin-left: 5px; }
.views { display: flex; align-items: center; margin-left: auto; padding-right: 10px; }
.view { width: 24px; height: 24px; justify-content: center; margin-right: 2px; }
.views .divider { margin: 0 11px 0 7px; background: #d9dce2; }
.percent { margin: 0 13px 0 0; padding-left: 1px; color: #4a5570; }
.zoom { width: 145px; height: 16px; margin: 0 5px 0 11px; appearance: none; background: linear-gradient(#3b4358, #3b4358) 0 8px / 70px 1px no-repeat, linear-gradient(#c9cdd6, #c9cdd6) 0 8px / 145px 1px no-repeat; }
.zoom::-webkit-slider-thumb { appearance: none; width: 13px; height: 13px; border: 1px solid #3b4358; border-radius: 50%; background: #f0f1f3; }
.views .full { margin: 0 0 0 8px; }

/* floating overlays */
.meter { position: absolute; right: 0; top: 854px; z-index: 3; }
.ime { position: absolute; right: 0; top: 927px; z-index: 3; display: flex; align-items: center; gap: 11px; height: 26px; padding: 0 5px 0 37px; border: 1px solid #b4cbe8; background: #fff; color: #0a6fd8; }
.ime b { font-size: 15px; }
.ime-logo { position: absolute; left: 0; top: -5px; }
.site-mark { position: absolute; right: 6px; bottom: 8px; z-index: 3; display: flex; opacity: .85; pointer-events: none; }
.site-mark div { display: flex; flex-direction: column; }
.site-mark strong { font-size: 21px; line-height: 24px; font-weight: 700; color: #5b97d3; }
.site-mark span { font: 700 17px/18px "Liberation Sans", sans-serif; color: #5cbf78; }
```
